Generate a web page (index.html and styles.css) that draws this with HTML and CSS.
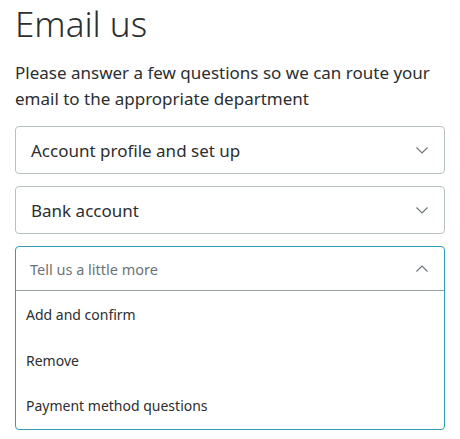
FILE: index.html
```html
<!DOCTYPE html>
<html lang="en">
<head>
  <meta charset="UTF-8" />
  <meta name="viewport" content="width=device-width, initial-scale=1.0">
  <title>Email us</title>
  <link rel="stylesheet" href="styles.css">
</head>
<body>

  <h1 class="title">Email us</h1>
  <p class="intro">Please answer a few questions so we can route your email to the appropriate department</p>

  <div class="select">
    <span class="select-value">Account profile and set up</span>
    <svg class="chevron" viewBox="0 0 12 7" width="12" height="7"><path d="M0.5 0.5l5.5 5.5 5.5-5.5" /></svg>
  </div>

  <div class="select">
    <span class="select-value">Bank account</span>
    <svg class="chevron" viewBox="0 0 12 7" width="12" height="7"><path d="M0.5 0.5l5.5 5.5 5.5-5.5" /></svg>
  </div>

  <!-- dropdown aberto -->
  <div class="select-open">
    <div class="select-head">
      <span class="placeholder">Tell us a little more</span>
      <svg class="chevron" viewBox="0 0 12 7" width="12" height="7"><path d="M0.5 6.5l5.5-5.5 5.5 5.5" /></svg>
    </div>
    <ul class="options">
      <li>Add and confirm</li>
      <li>Remove</li>
      <li>Payment method questions</li>
    </ul>
  </div>

</body>
</html>
```

FILE: styles.css
```css
body {
  margin: 0;
  padding: 0 15px;
  font-family: 'Noto Sans', sans-serif;
  color: #2c2e2f;
  background: #fff;
}

.title {
  font-size: 35px;
  font-weight: 300;
  margin: 0;
  padding-top: 2px;
  line-height: 44px;
}

.intro {
  font-size: 17px;
  line-height: 26px;
  margin: 14px 0 14px;
}

.select {
  display: flex;
  align-items: center;
  justify-content: space-between;
  height: 46px;
  border: 1px solid #b9c0c4;
  border-radius: 4px;
  padding: 0 16px 0 15px;
  margin-bottom: 12px;
}

.select-value {
  font-size: 17px;
}

.chevron {
  fill: none;
  stroke: #6c7378;
  stroke-width: 1.1;
}

.select-open {
  border: 1px solid #2f9db3;
  border-radius: 4px;
}

.select-head {
  display: flex;
  align-items: center;
  justify-content: space-between;
  height: 43px;
  padding: 0 16px 0 14px;
  border-bottom: 1px solid #9aa1a5;
}

.placeholder {
  font-size: 14.5px;
  color: #6c7378;
}

.options {
  list-style: none;
  margin: 0;
  padding: 14px 0 0;
}

.options li {
  font-size: 14px;
  line-height: 20px;
  padding: 0 10px;
  height: 45.5px;
}

.options li:last-child {
  height: 33px;
}
```
